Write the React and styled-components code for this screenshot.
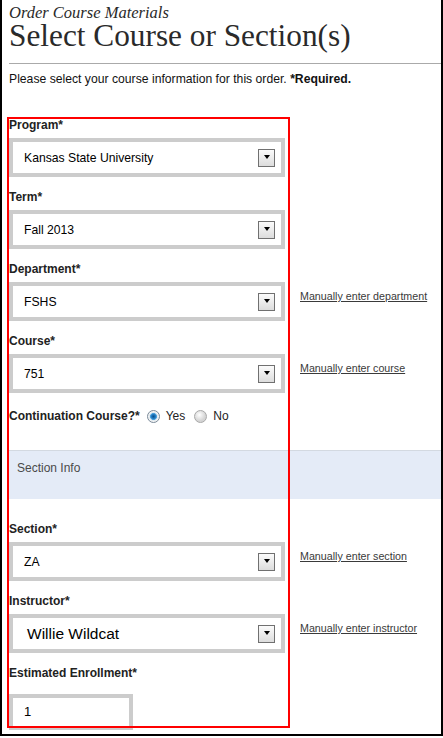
import React from "react";
import styled, { createGlobalStyle } from "styled-components";

const Global = createGlobalStyle`
  html, body { margin: 0; padding: 0; background: #fff; }
  body { font-family: "Liberation Sans", Arial, sans-serif; color: #222; }
  * { box-sizing: border-box; }
`;

const Frame = styled.div`
  position: relative;
  width: 443px;
  height: 736px;
  border: 2px solid #000;
  border-top: none;
  padding-left: 7px;
  overflow: hidden;
`;

const Kicker = styled.div`
  font-family: "Liberation Serif", "Times New Roman", serif;
  font-style: italic;
  font-size: 16.5px;
  line-height: 16px;
  padding-top: 5px;
  color: #2a2a2a;
`;

const Title = styled.h1`
  margin: 0;
  font-family: "Liberation Serif", "Times New Roman", serif;
  font-weight: normal;
  font-size: 31.3px;
  line-height: 30px;
  color: #2a2a2a;
`;

const Rule = styled.hr`
  margin: 12px 0 0;
  border: none;
  border-top: 1px solid #aaa;
  height: 0;
`;

const Intro = styled.p`
  margin: 8px 0 0;
  font-size: 12.2px;
  line-height: 14px;
  color: #111;
  b { font-weight: bold; }
`;

const Form = styled.div`
  margin-top: 31px;
  display: flex;
  flex-direction: column;
`;

const Field = styled.div`
  margin-bottom: ${(p) => (p.$mb ?? 12)}px;
`;

const Label = styled.div`
  font-size: 12px;
  font-weight: bold;
  line-height: 16px;
  color: #222;
  margin-bottom: ${(p) => (p.$gap ?? 5)}px;
`;

const Row = styled.div`
  display: grid;
  grid-template-columns: 276px auto;
  column-gap: 15px;
  align-items: start;
`;

const SelectBox = styled.div`
  width: 276px;
  height: 39px;
  border: 4px solid #cccccc;
  background: #fff;
  display: flex;
  align-items: center;
  justify-content: space-between;
  padding: 0 6px 0 ${(p) => (p.$big ? 14 : 11)}px;
  font-size: ${(p) => (p.$big ? 15.5 : 12.2)}px;
  color: #000;
`;

const Caret = styled.span`
  width: 17px;
  height: 18px;
  border: 1px solid #707070;
  background: linear-gradient(#fbfbfb, #dcdcdc);
  display: flex;
  align-items: center;
  justify-content: center;
  padding-bottom: 1px;
  &::after {
    content: "";
    border-left: 3.5px solid transparent;
    border-right: 3.5px solid transparent;
    border-top: 4px solid #000;
  }
`;

const SideLink = styled.a`
  padding-top: 7px;
  font-size: 10.7px;
  line-height: 14px;
  color: #3a3a3a;
  text-decoration: underline;
  white-space: nowrap;
`;

const RadioRow = styled.div`
  display: flex;
  align-items: center;
  height: 16px;
  font-size: 12px;
`;

const RadioLabel = styled.span`
  font-weight: bold;
  color: #222;
  margin-right: 7px;
`;

const Radio = styled.span`
  width: 13px;
  height: 13px;
  border-radius: 50%;
  border: 1px solid ${(p) => (p.$on ? "#7a8a99" : "#a8a8a8")};
  background: ${(p) =>
    p.$on
      ? "radial-gradient(circle at 50% 50%, #0a4f8c 0, #1f78bd 2px, #58ace4 3.4px, #d9e6ef 3.7px, #f4f4f4 5px)"
      : "radial-gradient(circle at 40% 35%, #ffffff 0, #f0f0f0 2px, #d4d4d4 6px)"};
  margin-right: 6px;
  flex: none;
`;

const RadioText = styled.span`
  color: #222;
  margin-right: 9px;
`;

const Band = styled.div`
  margin: 26px 0 0 0;
  height: 49px;
  border-top: 1px solid #d3d9e1;
  background: #e4ebf7;
  padding: 10px 0 0 8px;
  font-size: 12px;
  line-height: 14px;
  color: #4a4a4a;
`;

const Spacer = styled.div`
  height: ${(p) => p.$h}px;
`;

const TextInput = styled.input`
  width: 124px;
  height: 36px;
  border: 4px solid #cccccc;
  padding: 0 0 2px 11px;
  font-family: "Liberation Sans", Arial, sans-serif;
  font-size: 13px;
  color: #000;
  outline: none;
  background: #fff;
`;

const Highlight = styled.div`
  position: absolute;
  left: 5px;
  top: 117px;
  width: 283px;
  height: 611px;
  border: 2px solid #ff0000;
  pointer-events: none;
`;

function SelectField({ label, value, link, big, mb }) {
  return (
    <Field $mb={mb}>
      <Label>{label}</Label>
      <Row>
        <SelectBox $big={big}>
          <span>{value}</span>
          <Caret />
        </SelectBox>
        {link && <SideLink href="#">{link}</SideLink>}
      </Row>
    </Field>
  );
}

export default function App() {
  return (
    <>
      <Global />
      <Frame>
        <Kicker>Order Course Materials</Kicker>
        <Title>Select Course or Section(s)</Title>
        <Rule />
        <Intro>
          Please select your course information for this order. <b>*Required.</b>
        </Intro>
        <Form>
          <SelectField label="Program*" value="Kansas State University" />
          <SelectField label="Term*" value="Fall 2013" />
          <SelectField label="Department*" value="FSHS" link="Manually enter department" />
          <SelectField label="Course*" value="751" link="Manually enter course" mb={15} />
          <RadioRow>
            <RadioLabel>Continuation Course?*</RadioLabel>
            <Radio $on />
            <RadioText>Yes</RadioText>
            <Radio />
            <RadioText>No</RadioText>
          </RadioRow>
          <Band>Section Info</Band>
          <Spacer $h={22} />
          <SelectField label="Section*" value="ZA" link="Manually enter section" />
          <SelectField label="Instructor*" value="Willie Wildcat" big link="Manually enter instructor" />
          <Field>
            <Label $gap={13}>Estimated Enrollment*</Label>
            <TextInput readOnly value="1" />
          </Field>
        </Form>
        <Highlight />
      </Frame>
    </>
  );
}
